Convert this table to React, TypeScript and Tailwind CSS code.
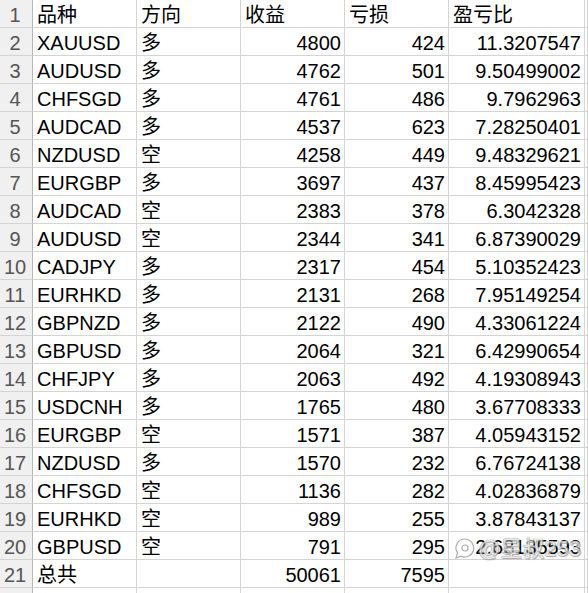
const rows: [string, string, string, string, string][] = [
  ['XAUUSD', '多', '4800', '424', '11.3207547'],
  ['AUDUSD', '多', '4762', '501', '9.50499002'],
  ['CHFSGD', '多', '4761', '486', '9.7962963'],
  ['AUDCAD', '多', '4537', '623', '7.28250401'],
  ['NZDUSD', '空', '4258', '449', '9.48329621'],
  ['EURGBP', '多', '3697', '437', '8.45995423'],
  ['AUDCAD', '空', '2383', '378', '6.3042328'],
  ['AUDUSD', '空', '2344', '341', '6.87390029'],
  ['CADJPY', '多', '2317', '454', '5.10352423'],
  ['EURHKD', '多', '2131', '268', '7.95149254'],
  ['GBPNZD', '多', '2122', '490', '4.33061224'],
  ['GBPUSD', '多', '2064', '321', '6.42990654'],
  ['CHFJPY', '多', '2063', '492', '4.19308943'],
  ['USDCNH', '多', '1765', '480', '3.67708333'],
  ['EURGBP', '空', '1571', '387', '4.05943152'],
  ['NZDUSD', '多', '1570', '232', '6.76724138'],
  ['CHFSGD', '空', '1136', '282', '4.02836879'],
  ['EURHKD', '空', '989', '255', '3.87843137'],
  ['GBPUSD', '空', '791', '295', '2.68135593'],
];

const font = { fontFamily: '"Liberation Sans", Arial, "Noto Sans CJK SC", sans-serif' };

const cell = 'h-[28px] border-r border-b border-[#d4d4d4] text-[20px] leading-[28px] pt-[1px] overflow-hidden whitespace-nowrap text-black';
const left = `${cell} pl-[4px]`;
const right = `${cell} pr-[3px] text-right`;
const head = 'h-[28px] border-r border-b border-r-[#b8b8b8] border-b-[#d4d4d4] bg-[#f0f0f0] text-[20px] leading-[28px] pt-[1px] text-center pr-[2px] text-[#555]';

const Row = ({ n, cells }: { n: number; cells: string[] }) => (
  <>
    <div className={head}>{n}</div>
    <div className={left}>{cells[0]}</div>
    <div className={left}>{cells[1]}</div>
    <div className={right}>{cells[2]}</div>
    <div className={right}>{cells[3]}</div>
    <div className={right}>{cells[4]}</div>
    <div className={cell}></div>
  </>
);

export default function App() {
  return (
    <div className="relative w-[588px] h-[593px] overflow-hidden bg-white" style={font}>
      <div className="grid grid-cols-[33px_104px_104px_104px_104px_136px_1fr]">
        <div className={head}>1</div>
        <div className={left}>品种</div>
        <div className={left}>方向</div>
        <div className={left}>收益</div>
        <div className={left}>亏损</div>
        <div className={left}>盈亏比</div>
        <div className={cell}></div>
        {rows.map((r, i) => (
          <Row key={i} n={i + 2} cells={r} />
        ))}
        <Row n={21} cells={['总共', '', '50061', '7595', '']} />
        <div className={head}></div>
        <div className={cell}></div>
        <div className={cell}></div>
        <div className={cell}></div>
        <div className={cell}></div>
        <div className={cell}></div>
        <div className={cell}></div>
      </div>

      {/* watermark */}
      <div className="absolute left-[454px] top-[536px] flex items-center gap-[2px] opacity-80">
        <svg width="22" height="24" viewBox="0 0 22 24">
          <path
            d="M11 2a9 9 0 0 0-7.5 14l-1.5 5 5-1.8A9 9 0 1 0 11 2z"
            fill="rgba(255,255,255,0.7)"
            stroke="#9a9a9a"
            strokeWidth="1.2"
          />
          <circle cx="11" cy="11" r="3" fill="none" stroke="#9a9a9a" strokeWidth="1.2" />
        </svg>
        <span
          className="text-[22px] leading-[26px] text-white/80"
          style={{ textShadow: '0 0 1px #777, 0 0 1px #777, 1px 1px 1px #999' }}
        >
          @星叔253
        </span>
      </div>
    </div>
  );
}
